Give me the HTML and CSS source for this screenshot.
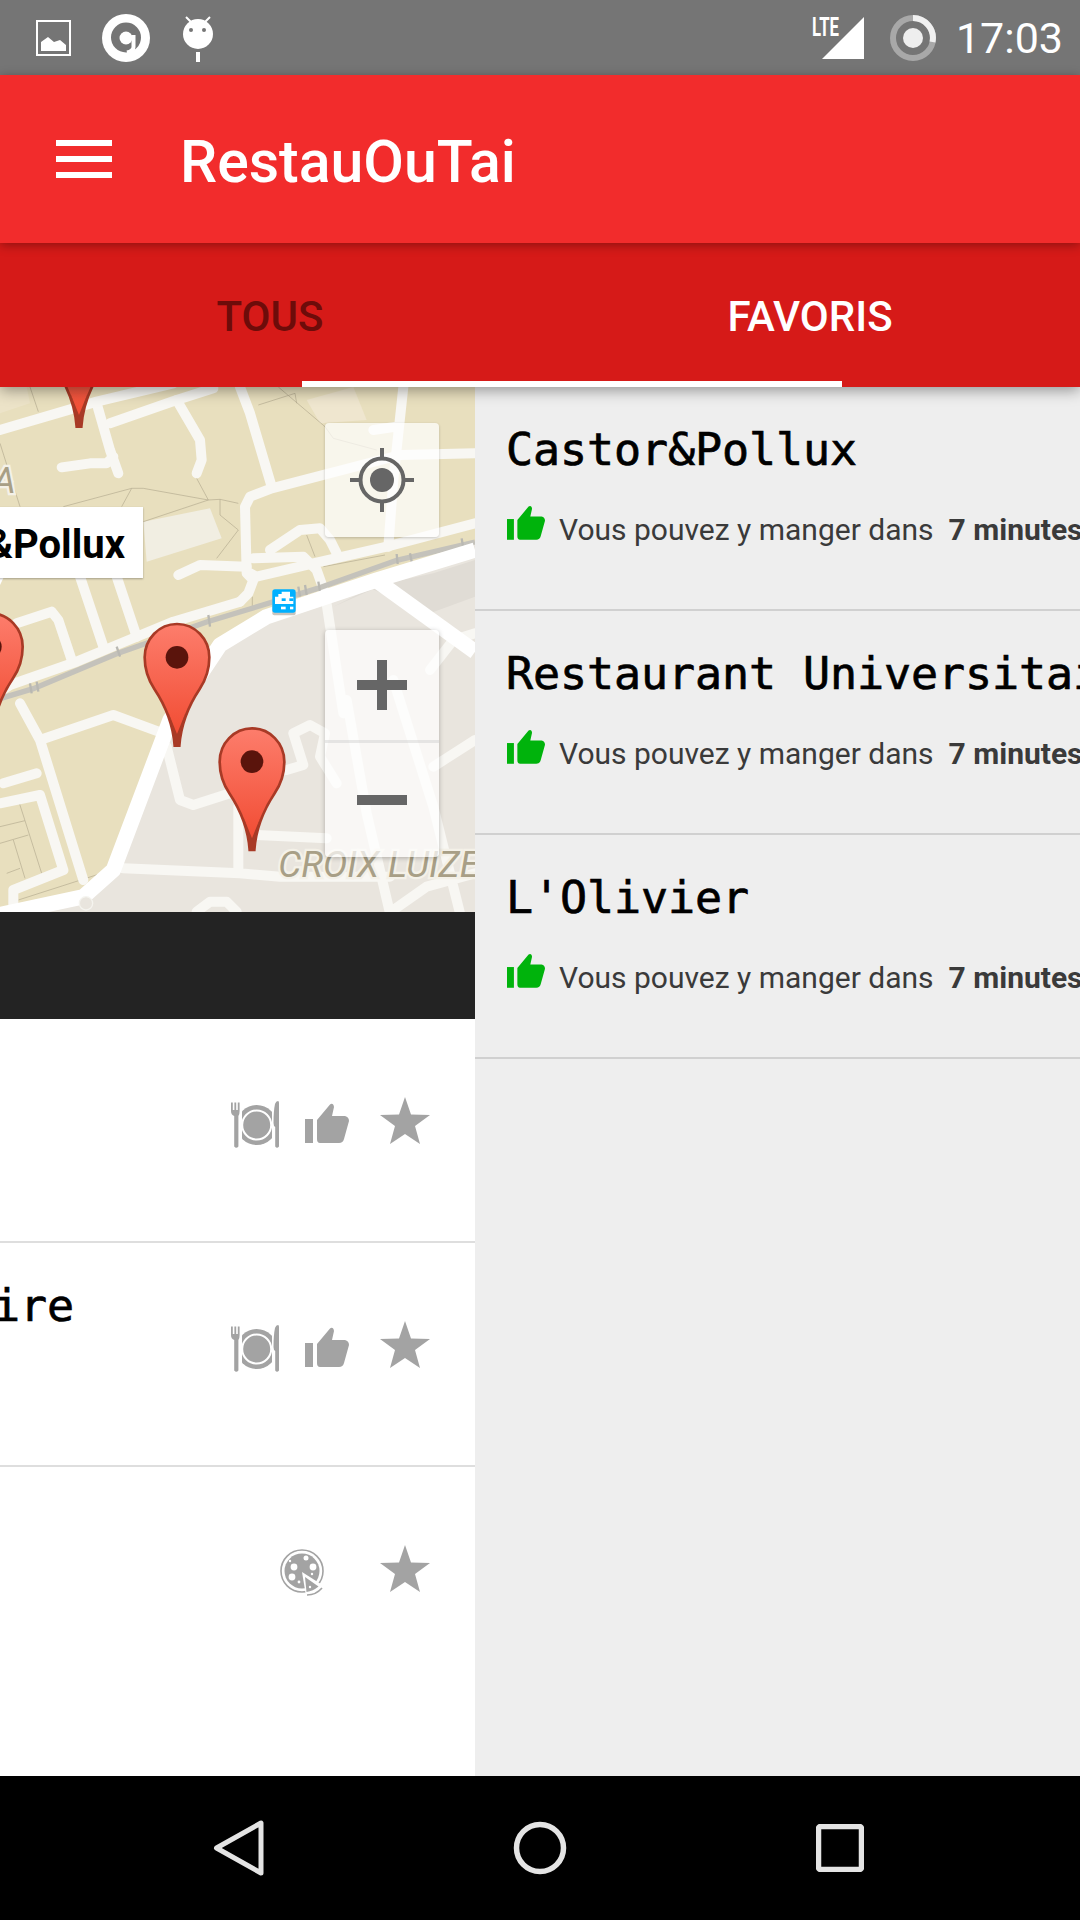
FILE: index.html
```html
<!DOCTYPE html>
<html lang="fr">
<head>
  <meta charset="UTF-8">
  <title>RestauOuTai</title>
  <link rel="stylesheet" href="styles.css">
</head>
<body>
  <!-- shared icons -->
  <svg class="defs" width="0" height="0">
    <defs>
      <linearGradient id="pinFill" x1="0" y1="0" x2="0" y2="1">
        <stop offset="0" stop-color="#fd7d6c"/>
        <stop offset="1" stop-color="#f0482e"/>
      </linearGradient>
      <clipPath id="plateClip"><rect x="11" y="0" width="30" height="47"/></clipPath>
      <symbol id="pin" viewBox="-110 -376 220 380" overflow="visible">
        <path d="M-7 0C-12-70-38-125-68-170C-88-200-97-230-97-265A97 100 0 0 1 97-265C97-230 88-200 68-170C38-125 12-70 7 0Z" fill="url(#pinFill)" stroke="#a83a26" stroke-width="8"/>
        <path d="M-8 0C-10-35-16-70-26-100L0-35L26-100C16-70 10-35 8 0Z" fill="#a83a26"/>
        <circle cx="0" cy="-265" r="34" fill="#5a140c"/>
      </symbol>
      <symbol id="thumb" viewBox="0 0 44 40">
        <rect x="0" y="16" width="8" height="24"/>
        <path d="M12 17L25 1.5Q27 0 28.5 2L29 4L27 13L40 13Q44 14 44 18L39 36Q38 40 34 40L15 40Q12 40 12 36Z"/>
      </symbol>
      <symbol id="star" viewBox="0 0 50 47">
        <polygon points="25,0 31,17.5 50,18 35,29 40,47 25,37 10,47 15,29 0,18 19,17.5"/>
      </symbol>
      <symbol id="plate" viewBox="0 0 48 47">
        <circle cx="25.7" cy="24" r="20" clip-path="url(#plateClip)"/>
        <circle cx="25.7" cy="24" r="14.5" fill="none" stroke="#fff" stroke-width="2"/>
        <path d="M0 1.5H1.8V9H3.4V1.5H5.2V9H6.8V1.5H8.6V10Q8.6 14 7.4 15V45.5Q5.3 48 3.2 45.5V15Q0 14 0 10Z"/>
        <path d="M44 3Q45 0 47 0Q48 0 48 2V45.5Q46 48 44.2 45.5V26Q42.5 25 42.5 22Q42.5 10 44 3Z"/>
      </symbol>
      <symbol id="pizza" viewBox="0 0 45 47">
        <circle cx="22" cy="22" r="21" fill="none" stroke="currentColor" stroke-width="1.6"/>
        <circle cx="22" cy="22" r="17.5"/>
        <circle cx="14" cy="18" r="3.4" fill="#fff"/>
        <circle cx="26" cy="9" r="2.5" fill="#fff"/>
        <circle cx="33" cy="18" r="3.4" fill="#fff"/>
        <circle cx="12" cy="28" r="3.4" fill="#fff"/>
        <circle cx="10" cy="12" r="1.2" fill="#fff"/>
        <circle cx="19" cy="33" r="1.4" fill="#fff"/>
        <circle cx="32" cy="25" r="1.2" fill="#fff"/>
        <path d="M22 23L44 37L39 44Q33 47 26 47Z" fill="#fff"/>
        <path d="M25 28L38.5 37.5Q33 42 26.5 43Z"/>
        <circle cx="30" cy="38" r="1.2" fill="#fff"/>
        <path d="M27 46Q36 46 42 39" fill="none" stroke="currentColor" stroke-width="1.6"/>
      </symbol>
    </defs>
  </svg>

  <header class="status">
    <svg class="st-image" width="36" height="36" viewBox="0 0 36 36">
      <rect x="1" y="1" width="33" height="34" fill="none" stroke="#fff" stroke-width="2"/>
      <path d="M5 22L12 17L18 22L24 20L30 25V31H5Z" fill="#fff"/>
    </svg>
    <svg class="st-at" width="48" height="48" viewBox="0 0 48 48">
      <circle cx="24" cy="24" r="24" fill="#fff"/>
      <circle cx="24" cy="23.5" r="15" fill="#757575"/>
      <circle cx="24" cy="24" r="6.5" fill="#fff"/>
      <path d="M31.5 21V33Q31.5 37 25 38.5" fill="none" stroke="#fff" stroke-width="4"/>
    </svg>
    <svg class="st-droid" width="30" height="48" viewBox="0 0 30 48">
      <circle cx="15" cy="20" r="15" fill="#fff"/>
      <path d="M3 3L8 8M27 3L22 8" stroke="#fff" stroke-width="2"/>
      <circle cx="8" cy="16" r="2" fill="#757575"/>
      <circle cx="21" cy="16" r="2" fill="#757575"/>
      <rect x="13" y="38" width="4" height="10" fill="#fff"/>
    </svg>
    <svg class="st-signal" width="52" height="42" viewBox="0 0 52 42">
      <text x="0" y="19" class="lte" textLength="27" lengthAdjust="spacingAndGlyphs">LTE</text>
      <polygon points="52,0 52,42 10,42" fill="#fff"/>
    </svg>
    <svg class="st-sync" width="46" height="46" viewBox="0 0 46 46">
      <circle cx="23" cy="23" r="20" fill="none" stroke="#a8a8a8" stroke-width="6"/>
      <path d="M23 3A20 20 0 0 1 42.5 27" fill="none" stroke="#f0f0f0" stroke-width="6"/>
      <circle cx="23" cy="23" r="10" fill="#eee"/>
    </svg>
    <span class="clock">17:03</span>
  </header>

  <div class="toolbar">
    <div class="burger"><i></i><i></i><i></i></div>
    <h1 class="app-title">RestauOuTai</h1>
  </div>

  <nav class="tabs">
    <div class="tab">TOUS</div>
    <div class="tab tab-active">FAVORIS</div>
    <div class="tab-line"></div>
  </nav>

  <main class="pager">
    <div class="pages">
      <section class="page page-all">
        <div class="map">
          <svg class="map-art" width="1080" height="525" viewBox="-1815 21 3240 1575">
            <rect x="-1815" y="21" width="3240" height="1575" fill="#e8dfbe"/>
            <polygon points="920,60 1060,21 1100,120 960,130" fill="#efe6cf"/>
            <polygon points="430,425 630,385 665,475 440,545" fill="#f1eee2"/>
            <polygon points="0,21 80,21 90,70 0,100" fill="#ece3c8"/>
            <polygon points="1425,490 1130,590 800,700 640,790 500,1020 330,1460 250,1540 0,1596 1425,1596" fill="#e9e5de"/>
            <polygon points="1000,680 1110,625 1290,700 1425,650 1425,540 1300,580 1160,610" fill="#e0dcd5"/>

            <g class="lines">
              <path d="M90 21L115 95M0 190L60 380M190 380L395 325L365 380M395 325L430 325L625 360L590 295M430 425L625 360L660 358L715 370M660 358L660 405L715 450L650 535"/>
              <path d="M835 21L975 140L1000 175L1130 210M775 75L885 40L890 70M920 465L945 530M970 560L1155 525M757 650L757 690"/>
              <path d="M0 1340L75 1322L125 1480M55 1260L75 1322M0 1390L85 1365M40 1380L75 1495M20 1480L60 1465M55 1560L320 1475"/>
            </g>

            <g class="roads">
              <path d="M0 150L290 65L520 10M330 130L530 60L640 25"/>
              <path d="M290 70L330 210L355 280M185 262L270 250L320 250L340 230"/>
              <path d="M530 60L600 180L605 240L590 280"/>
              <path d="M720 21L750 100L815 320"/>
              <path d="M1425 220L1200 225L815 325L750 350L735 380L740 580L760 600L745 640L720 665"/>
              <path d="M1425 430L1160 500L940 550L770 590L750 580"/>
              <path d="M535 585L600 555L740 560M760 535L910 530L950 570L975 640L1030 1000"/>
              <path d="M810 510L900 450L960 445L990 480L1010 520"/>
              <path d="M1210 21L1180 300L1165 500M1120 150L1190 140"/>
              <path d="M240 590L310 800M350 590L410 770"/>
              <path d="M50 730L155 695L175 720L215 840"/>
              <path d="M60 970L120 1080L250 1500M120 1080L340 1005L490 1060M10 1210L110 1180M0 1270L120 1245L190 1470L40 1530L40 1600"/>
              <path d="M500 1100L540 1260L580 1275L690 1240M860 1170L910 1155L880 1060L930 1035L975 1060L960 1130L1010 1210"/>
              <path d="M370 1465L720 1480L840 1490L1170 1490M715 1280L715 1470M770 1365L980 1375"/>
              <path d="M1040 960L1100 1300L1170 1600M1180 900L1300 1280L1380 1600M1290 870L1360 780L1425 760M1300 1160L1425 1080M1180 1590L1280 1520L1425 1480M590 1595L630 1565L680 1565L710 1595"/>
            </g>
            <!-- tram line sits under the road that follows it -->
            <g class="rail">
              <path d="M1425 486L1190 541L950 626L620 726L350 821L100 926L0 956"/>
            </g>
            <g class="roads">
              <path d="M720 665L520 725L350 795L230 845L30 915L0 935"/>
            </g>
            <g class="ticks">
              <path d="M1385 475L1390 505M1230 520L1236 550M1190 522L1193 552M955 605L960 635M915 615L920 645M895 620L900 650M625 705L630 740M350 800L360 830M90 910L95 940M110 905L115 935"/>
            </g>
            <g class="main-road">
              <path d="M1425 510L1130 600L800 710L660 795L510 1020L340 1470L250 1550L0 1604"/>
              <path d="M1120 595L1425 815"/>
            </g>
            <circle cx="258" cy="1570" r="20" fill="#e9e5de" stroke="#f5f4ef" stroke-width="4"/>

            <text x="-22" y="340" class="map-label">A</text>
            <text x="835" y="1490" class="map-label">CROIX LUIZET</text>

            <!-- metro stop -->
            <rect x="817" y="636" width="70" height="70" rx="6" fill="#c9c5be"/>
            <rect x="817" y="628" width="70" height="70" rx="8" fill="#00b0ff"/>
            <path d="M845 635H870V650H880V672H825V650H835V642H845Z" fill="#fff"/>
            <rect x="845" y="655" width="12" height="8" fill="#00b0ff"/>
            <rect x="868" y="655" width="12" height="8" fill="#00b0ff"/>
            <rect x="843" y="680" width="14" height="8" fill="#fff"/>
            <rect x="870" y="680" width="10" height="8" fill="#fff"/>

            <use href="#pin" x="-110" y="-376" width="220" height="380" transform="translate(237 140)"/>
            <use href="#pin" x="-110" y="-376" width="220" height="380" transform="translate(-29 1065)"/>
            <use href="#pin" x="-110" y="-376" width="220" height="380" transform="translate(531 1097)"/>
            <use href="#pin" x="-110" y="-376" width="220" height="380" transform="translate(756 1410)"/>
            <polygon points="0,590 12,590 0,615" fill="#fff"/>
          </svg>

          <div class="pin-label">Castor&amp;Pollux</div>

          <button class="map-btn map-locate">
            <svg width="64" height="64" viewBox="0 0 64 64">
              <circle cx="32" cy="32" r="21.5" fill="none" stroke="#666" stroke-width="4"/>
              <circle cx="32" cy="32" r="12" fill="#666"/>
              <path d="M32 0V10M32 54V64M0 32H10M54 32H64" stroke="#666" stroke-width="4"/>
            </svg>
          </button>
          <div class="map-zoom">
            <button class="zoom-btn"><span class="sign sign-plus"></span></button>
            <button class="zoom-btn"><span class="sign"></span></button>
          </div>
        </div>
        <div class="map-strip"></div>

        <div class="row">
          <h2 class="row-title">Castor&amp;Pollux</h2>
          <div class="row-icons">
            <svg class="ico ico-plate"><use href="#plate"/></svg>
            <svg class="ico ico-thumb"><use href="#thumb"/></svg>
            <svg class="ico ico-star"><use href="#star"/></svg>
          </div>
        </div>
        <div class="row">
          <h2 class="row-title">Restaurant Universitaire</h2>
          <div class="row-icons">
            <svg class="ico ico-plate"><use href="#plate"/></svg>
            <svg class="ico ico-thumb"><use href="#thumb"/></svg>
            <svg class="ico ico-star"><use href="#star"/></svg>
          </div>
        </div>
        <div class="row row-last">
          <h2 class="row-title">L'Olivier</h2>
          <div class="row-icons">
            <svg class="ico ico-pizza"><use href="#pizza"/></svg>
            <svg class="ico ico-star"><use href="#star"/></svg>
          </div>
        </div>
      </section>

      <section class="page page-fav">
        <div class="fav">
          <h2 class="row-title">Castor&amp;Pollux</h2>
          <p class="fav-info">
            <svg class="fav-thumb"><use href="#thumb"/></svg>
            <span>Vous pouvez y manger dans</span>
            <b>7 minutes</b>
          </p>
        </div>
        <div class="fav">
          <h2 class="row-title">Restaurant Universitaire</h2>
          <p class="fav-info">
            <svg class="fav-thumb"><use href="#thumb"/></svg>
            <span>Vous pouvez y manger dans</span>
            <b>7 minutes</b>
          </p>
        </div>
        <div class="fav">
          <h2 class="row-title">L'Olivier</h2>
          <p class="fav-info">
            <svg class="fav-thumb"><use href="#thumb"/></svg>
            <span>Vous pouvez y manger dans</span>
            <b>7 minutes</b>
          </p>
        </div>
      </section>
    </div>
  </main>

  <footer class="navbar">
    <div class="nav-slot">
      <svg width="54" height="58" viewBox="0 0 54 58">
        <path d="M48 4V54L3.5 29Z" fill="none" stroke="#e4e4e4" stroke-width="5" stroke-linejoin="round"/>
      </svg>
    </div>
    <div class="nav-slot">
      <svg width="54" height="54" viewBox="0 0 54 54">
        <circle cx="27" cy="27" r="23.5" fill="none" stroke="#e4e4e4" stroke-width="5.5"/>
      </svg>
    </div>
    <div class="nav-slot">
      <svg width="48" height="48" viewBox="0 0 48 48">
        <rect x="2.5" y="2.5" width="43" height="43" rx="2" fill="none" stroke="#e4e4e4" stroke-width="5.5"/>
      </svg>
    </div>
  </footer>
</body>
</html>
```

FILE: styles.css
```css
* {
  box-sizing: border-box;
}
html, body {
  margin: 0;
  height: 100%;
}
body {
  width: 1080px;
  height: 1920px;
  overflow: hidden;
  display: flex;
  flex-direction: column;
  font-family: Roboto, "Liberation Sans", sans-serif;
  background-color: #fff;
}
.defs {
  position: absolute;
}

/* status bar */
.status {
  flex: none;
  height: 75px;
  display: flex;
  align-items: center;
  padding: 0 17px 0 36px;
  background-color: #757575;
}
.st-at {
  margin-left: 30px;
}
.st-droid {
  margin-left: 33px;
}
.st-signal {
  margin-left: auto;
}
.st-sync {
  margin-left: 26px;
}
.lte {
  font: bold 26px Roboto, sans-serif;
  fill: #fff;
}
.clock {
  margin-left: 20px;
  font-size: 43px;
  color: #fff;
}

/* toolbar */
.toolbar {
  flex: none;
  height: 168px;
  display: flex;
  align-items: center;
  padding-left: 56px;
  background-color: #f22c2c;
  position: relative;
  z-index: 3;
  box-shadow: 0 2px 10px rgba(0, 0, 0, 0.35);
}
.burger {
  width: 56px;
  display: flex;
  flex-direction: column;
  gap: 10px;
}
.burger i {
  display: block;
  height: 6px;
  background-color: #fff;
}
.app-title {
  margin: 4px 0 0 68px;
  font-size: 59px;
  font-weight: 500;
  color: #fff;
}

/* tabs */
.tabs {
  flex: none;
  height: 144px;
  display: flex;
  position: relative;
  z-index: 2;
  background-color: #d61a18;
  box-shadow: 0 3px 14px rgba(0, 0, 0, 0.4);
}
.tab {
  flex: 1;
  display: flex;
  align-items: center;
  justify-content: center;
  padding-top: 2px;
  font-size: 42px;
  font-weight: 500;
  color: #6d0c0a;
}
.tab-active {
  color: #fff;
}
.tab-line {
  position: absolute;
  left: 302px;
  bottom: 0;
  width: 540px;
  height: 6px;
  background-color: #fff;
}

/* sliding pages */
.pager {
  flex: 1;
  min-height: 0;
  overflow: hidden;
}
.pages {
  display: flex;
  width: 2160px;
  height: 100%;
  margin-left: -605px;
}
.page {
  flex: none;
  width: 1080px;
  height: 100%;
  overflow: hidden;
}
.page-all {
  background-color: #fff;
}
.page-fav {
  background-color: #eee;
}

/* map */
.map {
  height: 525px;
  position: relative;
  overflow: hidden;
}
.map-art {
  display: block;
}
.lines path {
  fill: none;
  stroke: #b3ab90;
  stroke-width: 2;
}
.rail path {
  fill: none;
  stroke: #c4c2bb;
  stroke-width: 16;
  filter: blur(2px);
}
.ticks path {
  fill: none;
  stroke: #b9b8b2;
  stroke-width: 7;
}
.roads path {
  fill: none;
  stroke: #f8f7f3;
  stroke-width: 30;
  stroke-linecap: round;
  stroke-linejoin: round;
}
.main-road path {
  fill: none;
  stroke: #fff;
  stroke-width: 46;
  stroke-linejoin: round;
}
.map-label {
  font-family: Roboto, sans-serif;
  font-size: 109px;
  font-style: italic;
  font-weight: 400;
  fill: #a89f86;
  stroke: #f4f1e8;
  stroke-width: 14;
  paint-order: stroke;
}
.pin-label {
  position: absolute;
  top: 120px;
  right: 332px;
  height: 71px;
  padding: 3px 18px 0;
  display: flex;
  align-items: center;
  font-size: 40px;
  font-weight: 700;
  color: #000;
  background-color: #fff;
  box-shadow: 0 1px 2px rgba(0, 0, 0, 0.3);
}
.map-btn,
.zoom-btn {
  display: flex;
  align-items: center;
  justify-content: center;
  width: 114px;
  padding: 0;
  border: none;
  background: none;
}
.map-btn {
  position: absolute;
  top: 36px;
  right: 36px;
  height: 114px;
  border-radius: 4px;
  background-color: rgba(255, 255, 255, 0.7);
  box-shadow: 0 1px 3px rgba(0, 0, 0, 0.2);
}
.map-zoom {
  position: absolute;
  top: 243px;
  right: 36px;
  width: 114px;
  height: 227px;
  border-radius: 4px;
  background-color: rgba(255, 255, 255, 0.7);
  box-shadow: 0 1px 5px rgba(0, 0, 0, 0.25);
}
.zoom-btn {
  height: 113px;
}
.zoom-btn:first-child {
  border-bottom: 3px solid rgba(200, 200, 200, 0.4);
}
.sign {
  display: block;
  width: 50px;
  height: 10px;
  background-color: #666;
  position: relative;
}
.sign-plus::after {
  content: "";
  position: absolute;
  left: 20px;
  top: -20px;
  width: 10px;
  height: 50px;
  background-color: #666;
}
.map-strip {
  height: 107px;
  background-color: #232323;
}

/* list rows */
.row {
  height: 224px;
  padding: 36px 45px 0 31px;
  display: flex;
  justify-content: space-between;
  border-bottom: 2px solid #dedede;
}
.row-last {
  border-bottom: none;
}
.row-title {
  margin: 0;
  font-family: "DejaVu Sans Mono", "Liberation Mono", monospace;
  font-size: 45px;
  font-weight: 400;
  line-height: 53px;
  letter-spacing: -0.09px;
  color: #000;
  white-space: nowrap;
  -webkit-text-stroke: 0.7px #000;
}
.row-icons {
  display: flex;
  align-items: flex-start;
  margin-top: 42px;
  color: #a3a3a3;
}
.ico {
  fill: #a3a3a3;
}
.ico-plate {
  width: 48px;
  height: 47px;
  margin: 4px 26px 0 0;
}
.ico-thumb {
  width: 44px;
  height: 40px;
  margin: 6px 31px 0 0;
}
.ico-star {
  width: 50px;
  height: 47px;
}
.ico-pizza {
  width: 45px;
  height: 47px;
  margin: 4px 55px 0 0;
}

/* favourites */
.fav {
  height: 224px;
  padding: 36px 0 0 31px;
  border-bottom: 2px solid #d0d0d0;
  white-space: nowrap;
}
.fav-info {
  display: flex;
  align-items: baseline;
  margin: 29px 0 0;
  font-size: 30px;
  color: #3a3a3a;
}
.fav-thumb {
  width: 38px;
  height: 35px;
  margin: 0 14px 0 1px;
  fill: #00b30c;
}
.fav-info b {
  margin-left: 15px;
}

/* bottom bar */
.navbar {
  flex: none;
  height: 144px;
  display: flex;
  justify-content: center;
  background-color: #000;
}
.nav-slot {
  width: 300px;
  display: flex;
  align-items: center;
  justify-content: center;
}
```
